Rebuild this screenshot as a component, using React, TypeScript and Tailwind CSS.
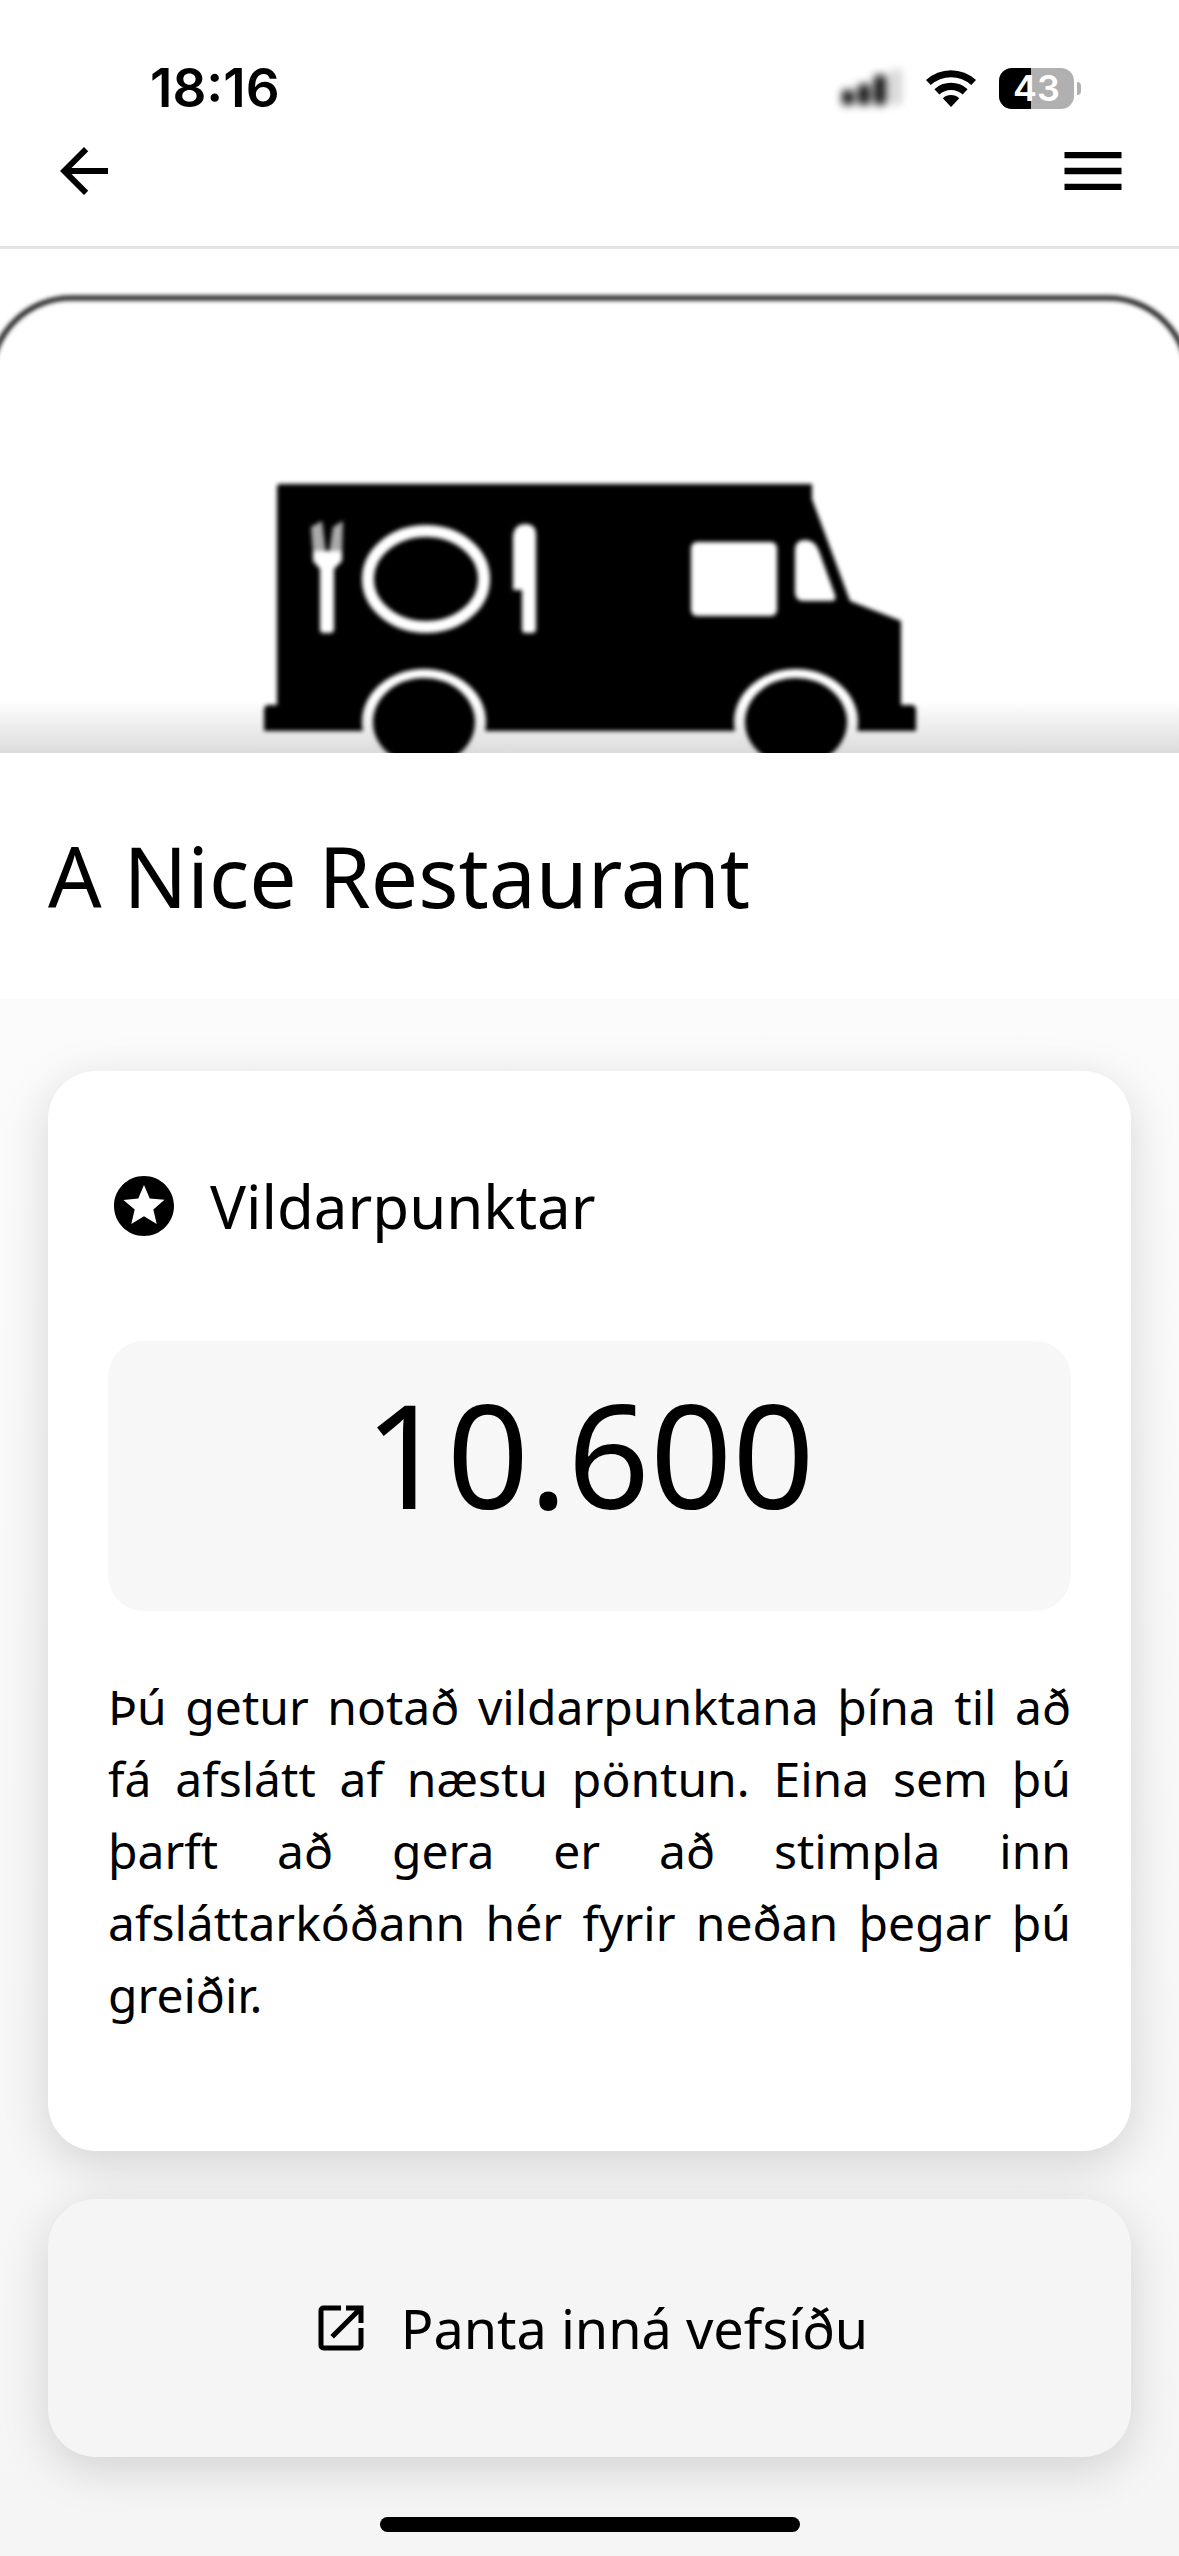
import React from 'react';
import { MdArrowBack, MdMenu, MdOpenInNew, MdStars } from 'react-icons/md';

interface Restaurant {
  name: string;
  points: number;
  website: string;
}

const restaurant: Restaurant = {
  name: 'A Nice Restaurant',
  points: 10600,
  website: '#vefsida',
};

// Icelandic notation, a dot between the thousands
const formatPoints = (points: number) =>
  points.toString().replace(/\B(?=(\d{3})+(?!\d))/g, '.');

const SignalIcon = () => (
  <svg viewBox="0 0 72 56" className="h-14 w-[72px] blur-[4px]" aria-hidden="true">
    <rect x="6" y="30" width="12" height="15" rx="4" fill="#111" />
    <rect x="22" y="24" width="12" height="21" rx="4" fill="#111" />
    <rect x="38" y="15" width="12" height="30" rx="4" fill="#111" />
    <rect x="54" y="9" width="12" height="36" rx="4" fill="#d6d6d6" />
  </svg>
);

const WifiIcon = () => (
  <svg viewBox="0 0 50 37" className="h-[37px] w-[50px]" aria-hidden="true">
    <path d="M0 10A37 37 0 0 1 50 10L45.3 15.1A30 30 0 0 0 4.7 15.1Z" />
    <path d="M8.4 19.2A24.3 24.3 0 0 1 41.6 19.2L36.6 24.6A17 17 0 0 0 13.4 24.6Z" />
    <path d="M16.8 28.2A12 12 0 0 1 33.2 28.2L25 37Z" />
  </svg>
);

const Battery = ({ level }: { level: number }) => (
  <div className="flex items-center gap-[3px]">
    <div className="relative flex h-[41px] w-[75px] items-center justify-center overflow-hidden rounded-[13px] bg-[#b0b0b0]">
      <div className="absolute inset-y-0 left-0 bg-black" style={{ width: `${level}%` }} />
      <span className="relative font-[Inter,sans-serif] text-[36px] leading-none font-semibold text-white">
        {level}
      </span>
    </div>
    <div className="h-[13px] w-1 rounded-r-full bg-[#b0b0b0]" />
  </div>
);

const StatusBar = () => (
  <div className="flex h-12 items-center justify-between pr-[98px] pl-[150px]">
    <span className="font-[Inter,sans-serif] text-[53px] leading-none font-semibold">18:16</span>
    <div className="flex items-center">
      <SignalIcon />
      <div className="ml-[18px] flex items-center gap-[23px]">
        <WifiIcon />
        <Battery level={43} />
      </div>
    </div>
  </div>
);

const FoodTruck = () => (
  <svg viewBox="0 0 1179 504" className="block w-full" role="img" aria-label="Food truck">
    <g className="blur-[2px]">
      <rect x="-9" y="49" width="1197" height="700" rx="80" fill="none" stroke="#1c1c1c" strokeWidth="5" />
    </g>
    <defs>
      <linearGradient id="shade" x1="0" y1="0" x2="0" y2="1">
        <stop offset="0" stopColor="#000" stopOpacity="0" />
        <stop offset="1" stopColor="#000" stopOpacity="0.14" />
      </linearGradient>
      <mask id="arches">
        <rect width="1179" height="504" fill="#fff" />
        <ellipse cx="424" cy="473" rx="62" ry="53" fill="#000" />
        <ellipse cx="796" cy="473" rx="62" ry="53" fill="#000" />
      </mask>
    </defs>
    <g className="blur-[2px]">
      <path
        mask="url(#arches)"
        d="M280 235H812V250L850 352L901 372V456H911Q916 456 916 461V482H264V461Q264 456 269 456H277V238Q277 235 280 235Z"
      />
      {/* Wheels, cut off by the bottom edge */}
      <ellipse cx="424" cy="473" rx="51" ry="44" />
      <ellipse cx="796" cy="473" rx="51" ry="44" />
      {/* Fork */}
      <path d="M311 278L322 272L326 304H313Z" fill="#aaa" />
      <path d="M333 278L343 272L342 304H329Z" fill="#aaa" />
      <path d="M313 302H342V312L334 320V380Q334 384 330 384H323Q320 384 320 380V320L313 312Z" fill="#fff" />
      {/* Plate */}
      <ellipse cx="426" cy="330" rx="58" ry="48" fill="none" stroke="#fff" strokeWidth="12" />
      {/* Knife */}
      <path d="M513 286Q515 275 525 275Q536 275 536 286V380Q536 384 532 384H525Q522 384 522 380V341H513Z" fill="#fff" />
      {/* Windows */}
      <rect x="691" y="293" width="86" height="74" rx="6" fill="#fff" />
      <path d="M795 301Q795 291 805 291Q815 291 819 302L835 346Q837 352 831 352H804Q795 352 795 343Z" fill="#fff" />
    </g>
    {/* Shade along the bottom */}
    <rect y="451" width="1179" height="53" fill="url(#shade)" />
  </svg>
);

const PointsCard = ({ points }: { points: number }) => (
  <section className="rounded-[48px] bg-white px-[60px] pt-[60px] pb-[120px] shadow-[0_12px_48px_rgba(0,0,0,0.15)]">
    <div className="flex h-[150px] items-center gap-[30px]">
      <MdStars size={72} />
      <h2 className="text-[60px] leading-none">Vildarpunktar</h2>
    </div>
    <div className="mt-[60px] rounded-[36px] bg-[#f7f7f7] pt-10 pb-[86px] text-center text-[144px] leading-[144px]">
      {formatPoints(points)}
    </div>
    <p className="mt-[60px] text-justify text-[48px] leading-[72px]">
      Þú getur notað vildarpunktana þína til að fá afslátt af næstu pöntun. Eina sem þú þarft að
      gera er að stimpla inn afsláttarkóðann hér fyrir neðan þegar þú greiðir.
    </p>
  </section>
);

const App = () => {
  return (
    <div className="flex min-h-screen flex-col bg-white font-['Noto_Sans',sans-serif] text-black">
      <header className="border-b-[3px] border-[#e4e4e4] pt-16">
        <StatusBar />
        <nav className="flex items-center justify-between px-12 pt-[21px] pb-[37px]">
          <button type="button" aria-label="Til baka">
            <MdArrowBack size={72} />
          </button>
          <button type="button" aria-label="Valmynd">
            <MdMenu size={76} />
          </button>
        </nav>
      </header>

      <FoodTruck />

      <h1 className="px-12 py-[63px] text-[84px] leading-[120px]">{restaurant.name}</h1>

      <main className="flex flex-1 flex-col gap-12 bg-linear-to-b from-[#fbfbfb] to-[#f5f5f5] px-12 pt-[72px] pb-6">
        <PointsCard points={restaurant.points} />
        <a
          href={restaurant.website}
          className="flex h-[258px] items-center justify-center gap-[30px] rounded-[48px] bg-[#f5f5f5] text-[54px] leading-none shadow-[0_12px_48px_rgba(0,0,0,0.15)]"
        >
          <MdOpenInNew size={60} />
          Panta inná vefsíðu
        </a>
        {/* Home indicator */}
        <div className="mx-auto mt-3 h-[15px] w-[420px] rounded-full bg-black" />
      </main>
    </div>
  );
};

export default App;
